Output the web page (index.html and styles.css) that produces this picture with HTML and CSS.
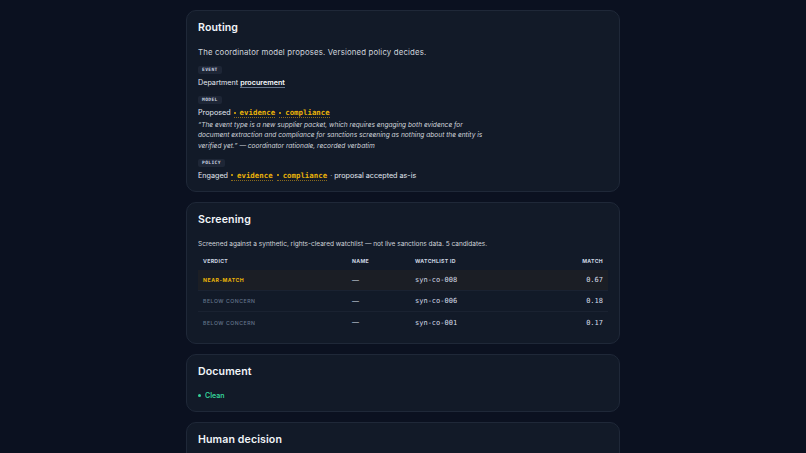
FILE: index.html
```html
<!DOCTYPE html>
<html lang="en">
<head>
<meta charset="utf-8">
<title>Case review</title>
<link rel="stylesheet" href="styles.css">
</head>
<body>
<main class="stack">
  <section class="card">
    <h2 class="card-title">Routing</h2>
    <p class="lead">The coordinator model proposes. Versioned policy decides.</p>
    <div class="step first">
      <span class="tag">EVENT</span>
      <p class="line">Department <span class="ul">procurement</span></p>
    </div>
    <div class="step">
      <span class="tag">MODEL</span>
      <p class="line">Proposed<span class="chip"><span class="dot"></span><span class="chip-name">evidence</span></span><span class="chip"><span class="dot"></span><span class="chip-name">compliance</span></span></p>
      <p class="quote">“The event type is a new supplier packet, which requires engaging both evidence for document extraction and compliance for sanctions screening as nothing about the entity is verified yet.” — coordinator rationale, recorded verbatim</p>
    </div>
    <div class="step">
      <span class="tag">POLICY</span>
      <p class="line">Engaged<span class="chip"><span class="dot"></span><span class="chip-name">evidence</span></span><span class="chip"><span class="dot"></span><span class="chip-name">compliance</span></span><span class="sep">·</span>proposal accepted as-is</p>
    </div>
  </section>

  <section class="card">
    <h2 class="card-title">Screening</h2>
    <p class="desc">Screened against a synthetic, rights-cleared watchlist — not live sanctions data. 5 candidates.</p>
    <table class="table">
      <colgroup><col class="c1"><col class="c2"><col class="c3"><col class="c4"></colgroup>
      <thead>
        <tr><th>Verdict</th><th>Name</th><th>Watchlist ID</th><th class="num">Match</th></tr>
      </thead>
      <tbody>
        <tr class="hot"><td class="verdict warn">Near-match</td><td class="dash">—</td><td class="mono">syn-co-008</td><td class="mono num">0.67</td></tr>
        <tr><td class="verdict">Below concern</td><td class="dash">—</td><td class="mono">syn-co-006</td><td class="mono num">0.18</td></tr>
        <tr><td class="verdict">Below concern</td><td class="dash">—</td><td class="mono">syn-co-001</td><td class="mono num">0.17</td></tr>
      </tbody>
    </table>
  </section>

  <section class="card">
    <h2 class="card-title">Document</h2>
    <p class="status"><span class="gdot"></span>Clean</p>
  </section>

  <section class="card tall">
    <h2 class="card-title">Human decision</h2>
  </section>
</main>
</body>
</html>
```
FILE: styles.css
```css
* { box-sizing: border-box; }
html, body { margin: 0; padding: 0; }
body {
  background: #0b1120;
  font-family: Inter, "Noto Sans", "Liberation Sans", sans-serif;
  color: #e2e8f0;
  overflow: hidden;
}
.stack {
  width: 434px;
  margin: 10px auto 0;
  display: flex;
  flex-direction: column;
  gap: 10px;
}
.card {
  background: #121a28;
  border: 1px solid #1f2838;
  border-radius: 10px;
  padding: 10px 11px 10px;
}
.card.tall { min-height: 60px; }
.card-title {
  margin: 0 0 12px;
  font-size: 10.6px;
  line-height: 14px;
  font-weight: 600;
  color: #f1f5f9;
  letter-spacing: 0.01em;
}
.lead {
  margin: 0;
  font-size: 7.8px;
  line-height: 10px;
  color: #cfd4dc;
  letter-spacing: 0.02em;
}
.step {
  margin-top: 8px;
  display: flex;
  flex-direction: column;
  align-items: flex-start;
}
.step.first { margin-top: 9px; }
.tag {
  display: block;
  height: 8px;
  line-height: 8px;
  padding: 0 4px;
  border-radius: 2px;
  background: #1e2636;
  color: #cbd5e1;
  font-family: "DejaVu Sans Mono", "Liberation Mono", monospace;
  font-size: 4.6px;
  font-weight: 700;
  letter-spacing: 0.08em;
}
.line {
  margin: 4px 0 0;
  font-size: 7.2px;
  line-height: 10px;
  color: #e2e8f0;
  display: flex;
  align-items: center;
}
.ul {
  margin-left: 2px;
  font-weight: 600;
  color: #f8fafc;
  border-bottom: 1px solid #64748b;
  line-height: 9px;
}
.chip {
  display: inline-flex;
  align-items: center;
  gap: 4px;
  margin-left: 3px;
  border-bottom: 1px dotted #8a6a1c;
  line-height: 9px;
}
.chip + .chip { margin-left: 4px; }
.dot {
  width: 2px;
  height: 2px;
  background: #eab308;
  border-radius: 1px;
}
.chip-name {
  font-family: "DejaVu Sans Mono", "Liberation Mono", monospace;
  font-size: 7.4px;
  font-weight: 700;
  color: #eab308;
}
.sep { color: #94a3b8; margin: 0 2px 0 3px; }
.quote {
  margin: 2px 0 0;
  max-width: 290px;
  font-size: 6.6px;
  line-height: 10.3px;
  font-style: italic;
  color: #d1d5db;
}
.desc {
  margin: 0;
  font-size: 6.5px;
  line-height: 10px;
  color: #d1d5db;
}
.table {
  width: 100%;
  margin-top: 4px;
  border-collapse: collapse;
  table-layout: fixed;
}
.c1 { width: 149px; }
.c2 { width: 63px; }
.c4 { width: 70px; }
.table th {
  height: 17px;
  padding: 0 5px;
  text-align: left;
  font-size: 5.2px;
  font-weight: 700;
  text-transform: uppercase;
  letter-spacing: 0.06em;
  color: #cbd5e1;
}
.table td {
  height: 21px;
  padding: 0 5px;
  border-top: 1px solid #1a2231;
  font-size: 7px;
  color: #cbd5e1;
}
.table .num { text-align: right; }
.table tr.hot td { background: #1b1e25; border-top: 0; }
.verdict {
  font-size: 5.2px !important;
  text-transform: uppercase;
  letter-spacing: 0.1em;
  color: #64748b !important;
  font-weight: 500;
}
.verdict.warn { color: #eab308 !important; font-weight: 700; }
.dash { color: #cbd5e1; }
.mono {
  font-family: "DejaVu Sans Mono", "Liberation Mono", monospace;
  font-size: 7px !important;
  color: #d6dde8 !important;
}
.status {
  margin: 0;
  display: flex;
  align-items: center;
  gap: 4px;
  font-size: 7px;
  line-height: 10px;
  font-weight: 600;
  color: #34d399;
}
.gdot {
  width: 3px;
  height: 3px;
  border-radius: 50%;
  background: #34d399;
}
```
